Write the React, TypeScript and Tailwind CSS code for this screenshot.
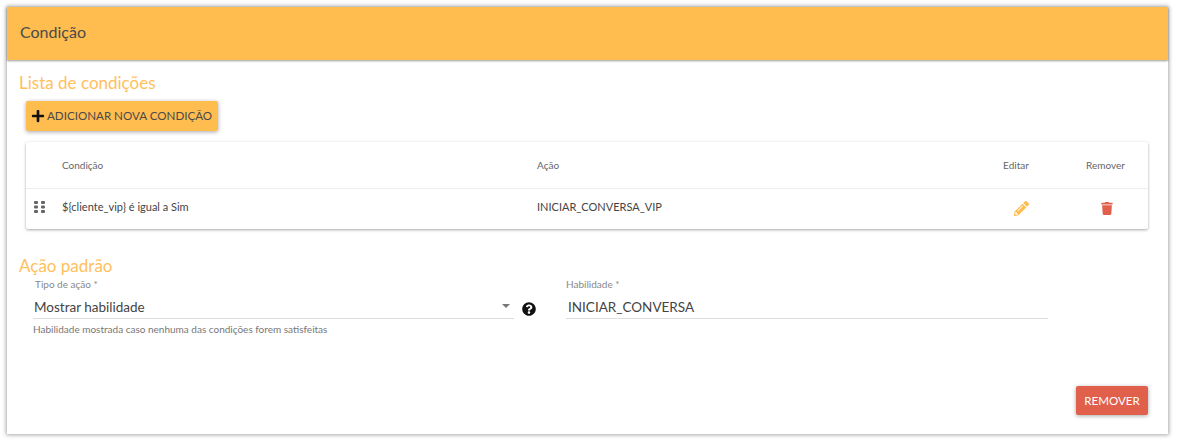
import { FaPlus, FaPencilAlt, FaTrash, FaQuestionCircle } from 'react-icons/fa'

function DragDots() {
  const rows = [0, 4.5, 9]
  return (
    <svg width="11" height="12" viewBox="0 0 11 12" className="text-[#666]">
      {rows.map((y) => (
        <g key={y} fill="currentColor">
          <rect x="0" y={y} width="4" height="3" rx="1" />
          <rect x="7" y={y} width="4" height="3" rx="1" />
        </g>
      ))}
    </svg>
  )
}

export default function App() {
  return (
    <div className="h-[442px] w-[1177px] bg-white pl-[7px] pt-[7px] font-['Lato',sans-serif] text-[#444]">
      <div className="flex h-[427px] w-[1161px] flex-col shadow-[0_0_4px_1px_rgba(0,0,0,0.35)]">
        {/* Header */}
        <div className="flex h-[53px] items-center bg-[#ffbc4f] pb-[3px] pl-[13px] text-[16px] text-[#4a4a4a] shadow-[0_1px_2px_rgba(0,0,0,0.4)]">
          Condição
        </div>

        <div className="flex flex-1 flex-col pl-[12px] pr-[20px]">
          <h2 className="mt-[13px] h-[20px] text-[17px] leading-[20px] text-[#ffc05c]">Lista de condições</h2>

          <button className="ml-[7px] mt-[8px] flex h-[30px] w-[192px] items-center gap-[2px] rounded-[2px] bg-[#ffbc4f] pl-[5px] text-[11.6px] text-[#4a4a4a] shadow-[0_1px_4px_rgba(0,0,0,0.35)]">
            <FaPlus className="h-[14px] w-[14px] text-[#111]" />
            ADICIONAR NOVA CONDIÇÃO
          </button>

          {/* Table */}
          <div className="ml-[7px] mt-[11px] w-[1122px] rounded-[2px] bg-white text-[10px] shadow-[0_1px_3px_rgba(0,0,0,0.35)]">
            <div className="flex h-[47px] items-center border-b border-[#eee] text-[#666]">
              <div className="w-[36px]" />
              <div className="w-[475px]">Condição</div>
              <div className="flex-1">Ação</div>
              <div className="w-[94px] text-center">Editar</div>
              <div className="w-[85px] text-center">Remover</div>
            </div>
            <div className="flex h-[40px] items-center pb-[4px] text-[11px] text-[#444]">
              <div className="flex w-[36px] justify-center pr-[10px]">
                <DragDots />
              </div>
              <div className="w-[475px]">{'${cliente_vip} é igual a Sim'}</div>
              <div className="flex-1">INICIAR_CONVERSA_VIP</div>
              <div className="flex w-[94px] justify-center pl-[10px] pt-[3px]">
                <FaPencilAlt className="h-[15px] w-[15px] text-[#ffbc4f]" />
              </div>
              <div className="flex w-[85px] justify-center pl-[3px] pt-[3px]">
                <FaTrash className="h-[13px] w-[12px] text-[#e0604c]" />
              </div>
            </div>
          </div>

          <h2 className="mt-[27px] h-[20px] text-[17px] leading-[20px] text-[#ffc05c]">Ação padrão</h2>

          {/* Form */}
          <div className="mt-[3px] flex items-start">
            <div className="ml-[14px] w-[481px]">
              <label className="block pl-[2px] text-[10px] leading-[11px] text-[#888]">Tipo de ação *</label>
              <div className="flex h-[29px] items-center justify-between border-b border-[#ddd] pl-[1px] pr-[4px] pt-[7px] text-[13.5px] text-[#444]">
                Mostrar habilidade
                <span className="mb-[3px] h-0 w-0 border-x-[4px] border-t-[4px] border-x-transparent border-t-[#777]" />
              </div>
              <p className="mt-[4px] text-[10px] leading-[12px] text-[#777]">
                Habilidade mostrada caso nenhuma das condições forem satisfeitas
              </p>
            </div>
            <FaQuestionCircle className="ml-[8px] mt-[23px] h-[14px] w-[14px] text-[#111]" />
            <div className="ml-[30px] w-[482px]">
              <label className="block text-[10px] leading-[11px] text-[#888]">Habilidade *</label>
              <div className="flex h-[29px] items-center border-b border-[#ddd] pl-[2px] pt-[6px] text-[13.5px] text-[#444]">
                INICIAR_CONVERSA
              </div>
            </div>
          </div>

          <div className="mt-auto flex justify-end pb-[19px]">
            <button className="h-[29px] w-[72px] rounded-[2px] bg-[#e0604c] text-[11.6px] text-white shadow-[0_1px_4px_rgba(0,0,0,0.35)]">
              REMOVER
            </button>
          </div>
        </div>
      </div>
    </div>
  )
}
